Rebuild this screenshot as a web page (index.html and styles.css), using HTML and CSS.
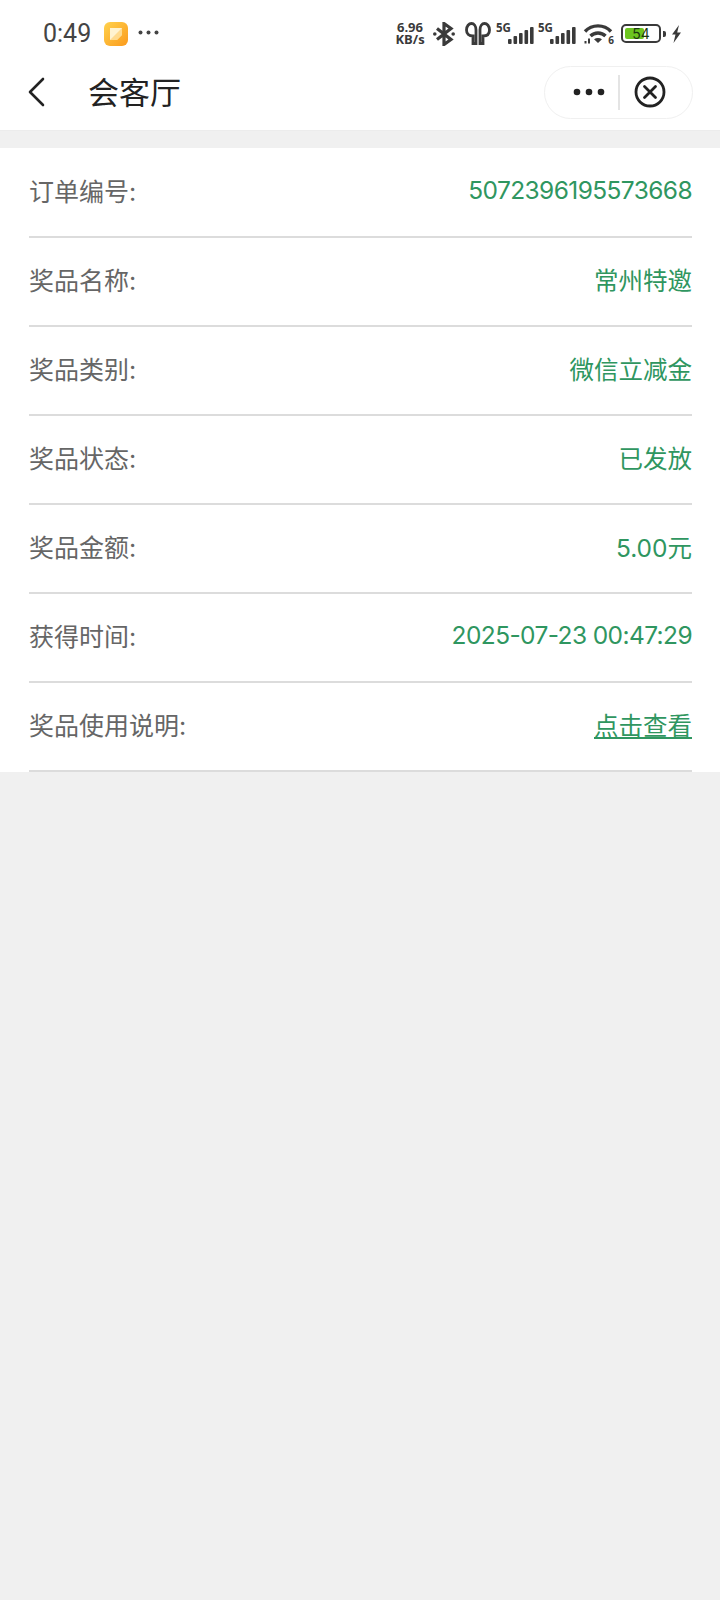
FILE: index.html
```html
<!DOCTYPE html>
<html lang="zh">
<head>
<meta charset="utf-8">
<title>会客厅</title>
<link rel="stylesheet" href="styles.css">
</head>
<body>
<header class="top">
  <div class="status">
    <div class="status-left">
      <span class="time">0:49</span>
      <svg class="app-icon" width="24" height="24" viewBox="0 0 24 24"><defs><linearGradient id="g" x1="0" y1="0" x2="1" y2="1"><stop offset="0" stop-color="#ffd24d"/><stop offset="1" stop-color="#fb9a1c"/></linearGradient></defs><rect width="24" height="24" rx="6" fill="url(#g)"/><path d="M6 6h12v7l-5 5H6z" fill="#fff3d0"/><path d="M18 6v7l-5 5H6z" fill="#ffc75a" opacity=".55"/></svg>
      <svg class="more-dots" width="21" height="5" viewBox="0 0 21 5"><circle cx="2.500" cy="2.500" r="2" fill="#444"/><circle cx="10.500" cy="2.500" r="2" fill="#444"/><circle cx="18.500" cy="2.500" r="2" fill="#444"/></svg>
    </div>
    <div class="status-right">
      <div class="speed"><span>6.96</span><span>KB/s</span></div>
      <svg class="bt" width="22" height="24" viewBox="0 0 22 24" fill="none" stroke="#3a3a3a" stroke-width="3.200"><path d="M4 6.500l14 11-7 5V1.500l7 5-14 11"/><circle cx="1.800" cy="12" r="1.800" fill="#3a3a3a" stroke="none"/><circle cx="20.200" cy="12" r="1.800" fill="#3a3a3a" stroke="none"/></svg>
      <svg class="pods" width="26" height="23" viewBox="0 0 26 23" fill="none" stroke="#3a3a3a" stroke-width="2.800"><path d="M8 21.500V14c-4 0-6.500-2-6.500-6S4 1.500 6.500 1.500 11 4 11 8v13.500z"/><path d="M18 21.500V14c4 0 6.500-2 6.500-6S22 1.500 19.500 1.500 15 4 15 8v13.500z"/></svg>
      <div class="signal">
        <span class="five-g">5G</span>
        <svg width="26" height="17" viewBox="0 0 26 17" fill="#3a3a3a"><rect x="0" y="12" width="3.600" height="5" rx="1"/><rect x="5.500" y="9" width="3.600" height="8" rx="1"/><rect x="11" y="6" width="3.600" height="11" rx="1"/><rect x="16.500" y="3" width="3.600" height="14" rx="1"/><rect x="22" y="0" width="3.600" height="17" rx="1"/></svg>
      </div>
      <div class="signal signal-second">
        <span class="five-g">5G</span>
        <svg width="26" height="17" viewBox="0 0 26 17" fill="#3a3a3a"><rect x="0" y="12" width="3.600" height="5" rx="1"/><rect x="5.500" y="9" width="3.600" height="8" rx="1"/><rect x="11" y="6" width="3.600" height="11" rx="1"/><rect x="16.500" y="3" width="3.600" height="14" rx="1"/><rect x="22" y="0" width="3.600" height="17" rx="1"/></svg>
      </div>
      <div class="wifi-wrap">
        <svg class="wifi" width="30" height="21" viewBox="0 0 30 21" fill="none" stroke="#3a3a3a" stroke-width="3.400"><path d="M2 8.500c7-7.500 19-7.500 26 0"/><path d="M7.500 13c4-4 11-4 15 0"/><path d="M15 20l-4-3.800c2.500-1.700 5.500-1.700 8 0z" fill="#3a3a3a" stroke="none"/><path d="M2.500 20.500v-2.500M6 20.500v-5" stroke-width="2"/></svg>
        <span class="wifi-num">6</span>
      </div>
      <div class="battery"><div class="cell"><div class="fill"></div><span class="level">54</span></div><div class="cap"></div></div>
      <svg class="bolt" width="11" height="18" viewBox="0 0 11 18" fill="#3a3a3a"><path d="M8 0L1 9.500h3.500L2.500 18 10 7.500H6.200z"/></svg>
    </div>
  </div>
  <nav class="nav">
    <svg class="back" width="18" height="30" viewBox="0 0 18 30" fill="none" stroke="#222" stroke-width="2.600" stroke-linecap="round" stroke-linejoin="round"><path d="M16 2L3 15l13 13"/></svg>
    <h1 class="title">会客厅</h1>
    <div class="capsule">
      <svg width="32" height="8" viewBox="0 0 32 8" fill="#222"><circle cx="4" cy="4" r="3.300"/><circle cx="16" cy="4" r="3.300"/><circle cx="28" cy="4" r="3.300"/></svg>
      <span class="capsule-line"></span>
      <svg width="32" height="32" viewBox="0 0 32 32" fill="none" stroke="#222" stroke-width="2.800"><circle cx="16" cy="16" r="14"/><path d="M10.500 10.500l11 11M21.500 10.500l-11 11" stroke-linecap="round"/></svg>
    </div>
  </nav>
</header>
<main class="list">
  <div class="row"><span class="label">订单编号:</span><span class="value num">5072396195573668</span></div>
  <div class="row"><span class="label">奖品名称:</span><span class="value">常州特邀</span></div>
  <div class="row"><span class="label">奖品类别:</span><span class="value">微信立减金</span></div>
  <div class="row"><span class="label">奖品状态:</span><span class="value">已发放</span></div>
  <div class="row"><span class="label">奖品金额:</span><span class="value">5.00元</span></div>
  <div class="row"><span class="label">获得时间:</span><span class="value num">2025-07-23 00:47:29</span></div>
  <div class="row"><span class="label">奖品使用说明:</span><a class="value link" href="#">点击查看</a></div>
</main>
</body>
</html>
```
FILE: styles.css
```css
* { box-sizing: border-box; }
html, body { margin: 0; padding: 0; }
body {
  width: 720px;
  height: 1600px;
  background: #f0f0f0;
  font-family: "Inter", "Noto Sans CJK SC", sans-serif;
  overflow: hidden;
}
.top {
  height: 131px;
  background: #fff;
  border-bottom: 1px solid #ececec;
}
.status {
  height: 58px;
  padding: 9px 38px 0 43px;
  display: flex;
  align-items: center;
  justify-content: space-between;
}
.status-left { display: flex; align-items: center; }
.time { font-size: 25px; color: #444; width: 61px; font-family: "Roboto", sans-serif; }
.app-icon { margin-right: 10px; }
.more-dots { margin-top: -2px; }
.status-right { display: flex; align-items: center; }
.speed {
  display: flex;
  flex-direction: column;
  align-items: center;
  font-size: 13px;
  line-height: 11.500px;
  font-weight: 700;
  color: #3a3a3a;
  font-family: "Open Sans", sans-serif;
  width: 30px;
}
.bt { margin-left: 8px; }
.pods { margin-left: 10px; }
.signal {
  display: flex;
  align-items: flex-end;
  justify-content: flex-end;
  position: relative;
  width: 38px;
  height: 20px;
  margin-left: 5px;
}
.signal-second { margin-left: 4px; }
.five-g {
  position: absolute;
  left: 0;
  top: -2px;
  font-size: 11.500px;
  line-height: 12px;
  font-weight: 700;
  color: #3a3a3a;
  font-family: "Open Sans", sans-serif;
}
.wifi-wrap {
  position: relative;
  width: 30px;
  height: 22px;
  margin-left: 7px;
  margin-top: 1px;
}
.wifi { display: block; }
.wifi-num {
  position: absolute;
  right: -1px;
  bottom: 0;
  font-size: 10px;
  line-height: 10px;
  font-weight: 700;
  color: #3a3a3a;
  font-family: "Open Sans", sans-serif;
}
.battery { display: flex; align-items: center; margin-left: 8px; }
.cell {
  width: 40px;
  height: 19px;
  border: 2px solid #3a3a3a;
  border-radius: 5px;
  padding: 2px;
  position: relative;
}
.fill { width: 58%; height: 100%; background: #6cc51f; border-radius: 2px; }
.level {
  position: absolute;
  left: 0;
  right: 0;
  top: 0;
  text-align: center;
  font-size: 14px;
  line-height: 15px;
  color: #1c3a10;
}
.cap { width: 3px; height: 6px; background: #3a3a3a; margin-left: 2px; border-radius: 0 2px 2px 0; }
.bolt { margin-left: 5px; }
.nav {
  height: 68px;
  display: flex;
  align-items: center;
  padding: 0 27px 0 27px;
}
.back { flex: none; }
.title {
  margin: 0 0 0 43px;
  padding-bottom: 3px;
  font-size: 31px;
  font-weight: 400;
  color: #222;
  flex: 1;
}
.capsule {
  width: 149px;
  height: 53px;
  border: 1px solid #f0f0f0;
  border-radius: 27px;
  display: flex;
  align-items: center;
  padding-left: 28px;
}
.capsule-line { width: 2px; height: 35px; background: #e4e4e4; margin: 0 14px 0 13px; }
.list {
  margin-top: 17px;
  background: #fff;
  padding: 1px 28px 0 29px;
  height: 624px;
}
.row {
  height: 89px;
  display: flex;
  align-items: center;
  justify-content: space-between;
  border-bottom: 2px solid #dcdcdc;
  padding-bottom: 5px;
}
.label { font-size: 25px; color: #666; }
.value { font-size: 24.500px; color: #2f9660; }
.num { letter-spacing: -0.600px; }
.link { text-decoration: underline; text-underline-offset: 2px; text-decoration-thickness: 2px; }
```
